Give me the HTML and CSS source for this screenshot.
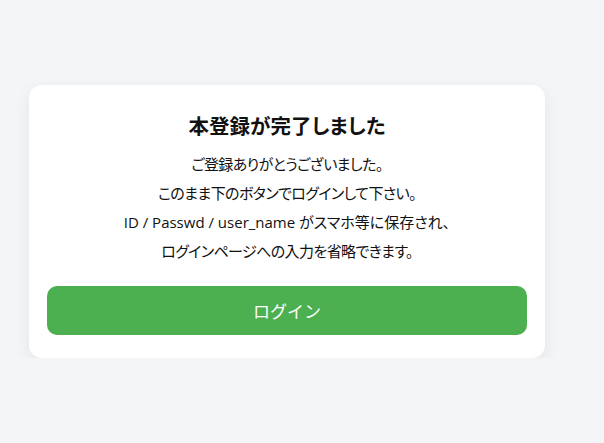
FILE: index.html
```html
<!DOCTYPE html>
<html lang="ja">
<head>
<meta charset="utf-8">
<title>本登録が完了しました</title>
<link rel="stylesheet" href="styles.css">
</head>
<body>
<main class="page">
  <section class="card">
    <h1 class="title">本登録が完了しました</h1>
    <div class="message">
      <p class="tight">ご登録ありがとうございました。</p>
      <p class="tight">このまま下のボタンでログインして下さい。</p>
      <p>ID / Passwd / user_name がスマホ等に保存され、</p>
      <p class="tight">ログインページへの入力を省略できます。</p>
    </div>
    <button class="login-btn" type="button">ログイン</button>
  </section>
</main>
</body>
</html>
```

FILE: styles.css
```css
html, body {
  margin: 0;
  padding: 0;
}
body {
  background: #f4f5f7;
  font-family: "Open Sans", "Noto Sans CJK JP", sans-serif;
  color: #111;
  font-feature-settings: "palt";
}
.page {
  padding: 85px 0 0 29px;
}
.card {
  box-sizing: border-box;
  width: 516px;
  height: 273px;
  background: #fff;
  border-radius: 13px;
  box-shadow: 0 5px 16px rgba(0, 0, 0, 0.07);
  padding: 25px 18px 23px;
  display: flex;
  flex-direction: column;
  align-items: stretch;
}
.title {
  margin: 0;
  font-size: 20.5px;
  line-height: 30px;
  font-weight: 700;
  text-align: center;
  font-family: "Noto Sans CJK JP", sans-serif;
}
.message {
  margin-top: 10px;
  text-align: center;
  font-size: 15px;
  line-height: 29px;
}
.message p {
  margin: 0;
}
.message .tight {
  letter-spacing: -0.6px;
}
.login-btn {
  margin-top: 20px;
  height: 49px;
  border: none;
  border-radius: 10px;
  background: #4caf50;
  color: #fff;
  font-family: "Noto Sans CJK JP", sans-serif;
  font-size: 17px;
  font-feature-settings: normal;
}
```
